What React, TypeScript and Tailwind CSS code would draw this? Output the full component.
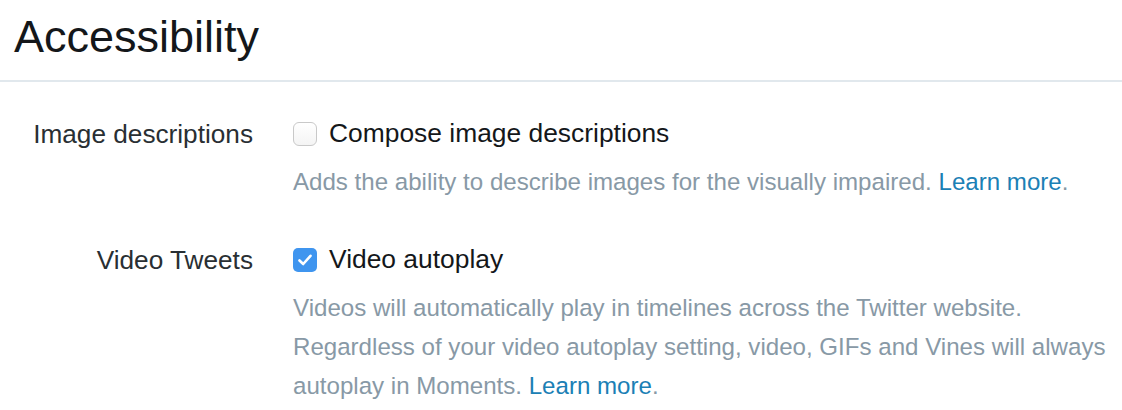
import React from "react";

const font = { fontFamily: '"Liberation Sans", Arial, sans-serif' };

function Box({ checked }: { checked: boolean }) {
  if (checked) {
    return (
      <span className="flex h-[24px] w-[24px] shrink-0 items-center justify-center rounded-[5px] bg-[#3f95ef]">
        <svg width="16" height="14" viewBox="0 0 16 14" fill="none">
          <path d="M2.5 7.5 L6.2 11 L13.5 2.8" stroke="#fff" strokeWidth="2.6" strokeLinecap="round" strokeLinejoin="round" />
        </svg>
      </span>
    );
  }
  return (
    <span className="h-[24px] w-[24px] shrink-0 rounded-[6px] border-[1.5px] border-[#c9c9c9] bg-gradient-to-b from-white to-[#f4f4f4]" />
  );
}

function Row({
  label,
  title,
  checked,
  children,
}: {
  label: string;
  title: string;
  checked: boolean;
  children: React.ReactNode;
}) {
  return (
    <div className="grid grid-cols-[253px_1fr] gap-x-[40px]">
      <div className="text-right text-[26.2px] leading-[36px] text-[#292f33]">{label}</div>
      <div>
        <label className="flex h-[36px] items-center gap-[12px] text-[26.4px] text-[#14171a]">
          <Box checked={checked} />
          <span>{title}</span>
        </label>
        <p className="mt-[10px] text-[24.1px] leading-[39px] text-[#8899a6]">{children}</p>
      </div>
    </div>
  );
}

export default function App() {
  return (
    <div className="h-[410px] w-[1122px] overflow-hidden bg-white" style={font}>
      <div className="box-border h-[82px] border-b-2 border-[#e1e8ed] px-[14px] pt-[12px]">
        <h1 className="text-[45px] leading-[50px] font-normal text-[#14171a]">Accessibility</h1>
      </div>
      <div className="flex flex-col gap-[41px] pt-[34px]">
        <Row label="Image descriptions" title="Compose image descriptions" checked={false}>
          Adds the ability to describe images for the visually impaired.{" "}
          <a className="text-[#1b80b5]">Learn more</a>.
        </Row>
        <Row label="Video Tweets" title="Video autoplay" checked={true}>
          Videos will automatically play in timelines across the Twitter website. Regardless of your video
          autoplay setting, video, GIFs and Vines will always autoplay in Moments.{" "}
          <a className="text-[#1b80b5]">Learn more</a>.
        </Row>
      </div>
    </div>
  );
}
